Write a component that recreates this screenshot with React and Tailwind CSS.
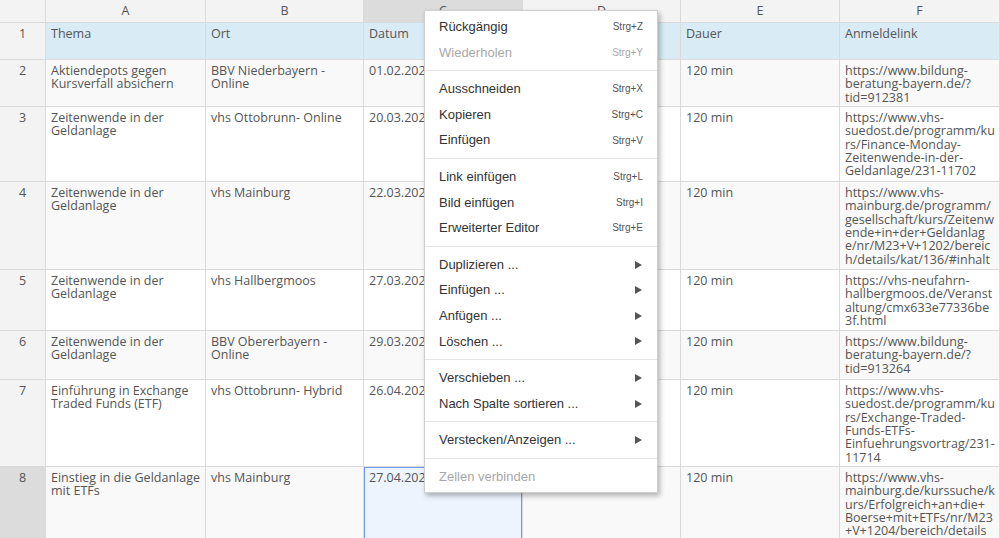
import React from 'react';

const cols = ['A', 'B', 'C', 'D', 'E', 'F'];

const rows = [
  { n: 1, h: 'h-[37px]', cells: [['Thema'], ['Ort'], ['Datum'], ['Uhrzeit'], ['Dauer'], ['Anmeldelink']] },
  {
    n: 2, h: 'h-[47px]',
    cells: [
      ['Aktiendepots gegen', 'Kursverfall absichern'],
      ['BBV Niederbayern -', 'Online'],
      ['01.02.2023'],
      ['18:00 Uhr'],
      ['120 min'],
      ['https://www.bildung-', 'beratung-bayern.de/?', 'tid=912381'],
    ],
  },
  {
    n: 3, h: 'h-[75px]',
    cells: [
      ['Zeitenwende in der', 'Geldanlage'],
      ['vhs Ottobrunn- Online'],
      ['20.03.2023'],
      ['18:00 Uhr'],
      ['120 min'],
      ['https://www.vhs-', 'suedost.de/programm/ku', 'rs/Finance-Monday-', 'Zeitenwende-in-der-', 'Geldanlage/231-11702'],
    ],
  },
  {
    n: 4, h: 'h-[88px]',
    cells: [
      ['Zeitenwende in der', 'Geldanlage'],
      ['vhs Mainburg'],
      ['22.03.2023'],
      ['19:00 Uhr'],
      ['120 min'],
      ['https://www.vhs-', 'mainburg.de/programm/', 'gesellschaft/kurs/Zeitenw', 'ende+in+der+Geldanlag', 'e/nr/M23+V+1202/bereic', 'h/details/kat/136/#inhalt'],
    ],
  },
  {
    n: 5, h: 'h-[61px]',
    cells: [
      ['Zeitenwende in der', 'Geldanlage'],
      ['vhs Hallbergmoos'],
      ['27.03.2023'],
      ['19:00 Uhr'],
      ['120 min'],
      ['https://vhs-neufahrn-', 'hallbergmoos.de/Veranst', 'altung/cmx633e77336be', '3f.html'],
    ],
  },
  {
    n: 6, h: 'h-[49px]',
    cells: [
      ['Zeitenwende in der', 'Geldanlage'],
      ['BBV Obererbayern -', 'Online'],
      ['29.03.2023'],
      ['18:00 Uhr'],
      ['120 min'],
      ['https://www.bildung-', 'beratung-bayern.de/?', 'tid=913264'],
    ],
  },
  {
    n: 7, h: 'h-[87px]',
    cells: [
      ['Einführung in Exchange', 'Traded Funds (ETF)'],
      ['vhs Ottobrunn- Hybrid'],
      ['26.04.2023'],
      ['18:00 Uhr'],
      ['120 min'],
      ['https://www.vhs-', 'suedost.de/programm/ku', 'rs/Exchange-Traded-', 'Funds-ETFs-', 'Einfuehrungsvortrag/231-', '11714'],
    ],
  },
  {
    n: 8, h: 'h-[100px]',
    cells: [
      ['Einstieg in die Geldanlage', 'mit ETFs'],
      ['vhs Mainburg'],
      ['27.04.2023'],
      ['19:00 Uhr'],
      ['120 min'],
      ['https://www.vhs-', 'mainburg.de/kurssuche/k', 'urs/Erfolgreich+an+die+', 'Boerse+mit+ETFs/nr/M23', '+V+1204/bereich/details'],
    ],
  },
];

const menu = [
  [
    { label: 'Rückgängig', key: 'Strg+Z' },
    { label: 'Wiederholen', key: 'Strg+Y', disabled: true },
  ],
  [
    { label: 'Ausschneiden', key: 'Strg+X' },
    { label: 'Kopieren', key: 'Strg+C' },
    { label: 'Einfügen', key: 'Strg+V' },
  ],
  [
    { label: 'Link einfügen', key: 'Strg+L' },
    { label: 'Bild einfügen', key: 'Strg+I' },
    { label: 'Erweiterter Editor', key: 'Strg+E' },
  ],
  [
    { label: 'Duplizieren ...', sub: true },
    { label: 'Einfügen ...', sub: true },
    { label: 'Anfügen ...', sub: true },
    { label: 'Löschen ...', sub: true },
  ],
  [
    { label: 'Verschieben ...', sub: true },
    { label: 'Nach Spalte sortieren ...', sub: true },
  ],
  [{ label: 'Verstecken/Anzeigen ...', sub: true }],
  [{ label: 'Zellen verbinden', disabled: true }],
];

const ContextMenu = () => (
  <div className="absolute left-[424px] top-[10px] w-[234px] bg-white border border-[#cfcfcf] shadow-[2px_3px_5px_rgba(0,0,0,0.28)] pt-[3px] pb-[2px] font-['Liberation_Sans',Arial,sans-serif]">
    {menu.map((group, gi) => (
      <div key={gi}>
        {gi > 0 && (
          <div className="h-[11px] flex items-center">
            <div className="w-full h-px bg-[#e6e6e6]" />
          </div>
        )}
        {group.map((item) => (
          <div key={item.label} className="h-[25.6px] flex items-center justify-between pl-[14px] pr-[14px]">
            <span className={`text-[13px] ${item.disabled ? 'text-[#a8a8a8]' : 'text-[#333333]'}`}>{item.label}</span>
            {item.key && (
              <span className={`text-[10px] ${item.disabled ? 'text-[#a8a8a8]' : 'text-[#555555]'}`}>{item.key}</span>
            )}
            {item.sub && (
              <svg width="7" height="8" viewBox="0 0 7 8" className="mr-[1px]">
                <path d="M0 0 L7 4 L0 8 Z" fill="#555555" />
              </svg>
            )}
          </div>
        ))}
      </div>
    ))}
  </div>
);

export default function App() {
  return (
    <div className="relative w-[1000px] h-[538px] overflow-hidden bg-white font-['Open_Sans','Noto_Sans',sans-serif] text-[12.5px] text-[#555555]">
      <div className="grid grid-cols-[46px_160px_158px_159px_158px_159px_160px]">
        {/* Column headers */}
        <div className="h-[23px] bg-[#f3f3f3] border-r border-b border-[#dadada]" />
        {cols.map((c) => (
          <div
            key={c}
            className={`h-[23px] flex items-center justify-center border-r border-b border-[#dadada] ${c === 'C' ? 'bg-[#dcdcdc]' : 'bg-[#f3f3f3]'}`}
          >
            {c}
          </div>
        ))}

        {/* Rows */}
        {rows.map((row) => {
          const bg = row.n === 1 ? 'bg-[#d9ebf5]' : row.n % 2 === 0 ? 'bg-[#f9f9f9]' : 'bg-white';
          return (
            <React.Fragment key={row.n}>
              <div
                className={`${row.h} text-center pt-[4px] leading-[14px] border-r border-b border-[#dadada] ${row.n === 8 ? 'bg-[#dcdcdc]' : 'bg-[#f3f3f3]'}`}
              >
                {row.n}
              </div>
              {row.cells.map((lines, ci) => {
                const selected = row.n === 8 && ci === 2;
                return (
                  <div
                    key={ci}
                    className={`${row.h} overflow-hidden px-[5px] pt-[4px] leading-[13.35px] border-r border-b border-[#dadada] ${selected ? 'bg-[#eef4fd] shadow-[inset_0_0_0_1px_#6c9ef0]' : bg}`}
                  >
                    {lines.map((l, li) => (
                      <div key={li} className="whitespace-nowrap">
                        {l}
                      </div>
                    ))}
                  </div>
                );
              })}
            </React.Fragment>
          );
        })}
      </div>

      <ContextMenu />
    </div>
  );
}
